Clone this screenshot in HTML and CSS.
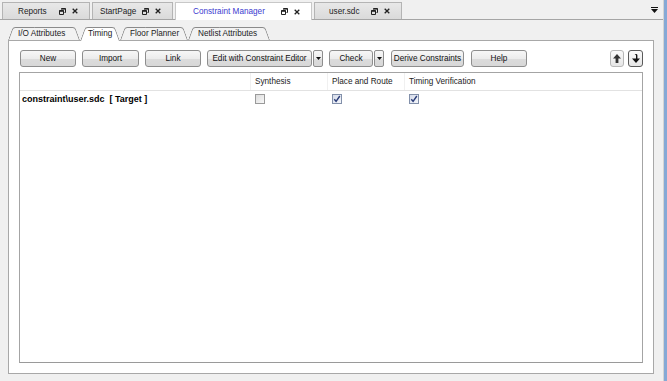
FILE: index.html
```html
<!DOCTYPE html>
<html lang="en">
<head>
    <meta charset="UTF-8">
    <meta name="viewport" content="width=device-width, initial-scale=1.0">
    <title>Constraint Manager</title>
    <link rel="stylesheet" href="styles.css">
</head>
<body>
    <div class="app">
        <div class="main">
            <div class="doc-tabs">
                <div class="doc-tab tab-reports">
                    <span class="tab-label">Reports</span>
                    <span class="tab-icons">
                        <svg width="7" height="7" viewBox="0 0 7 7"><path d="M2.5 1.5V.5h4v4H5.5" fill="none" stroke="#222"/><path d="M.5 2.5h4v4h-4z" fill="none" stroke="#222"/><path d="M.5 3h4" stroke="#222" stroke-width="1.6"/><path d="M2.5 1h4" stroke="#222" stroke-width="1.2"/></svg>
                        <svg width="6" height="6" viewBox="0 0 6 6"><path d="M.7.7l4.6 4.6M5.3.7L.7 5.3" stroke="#222" stroke-width="1.3"/></svg>
                    </span>
                </div>
                <div class="doc-tab tab-start">
                    <span class="tab-label">StartPage</span>
                    <span class="tab-icons">
                        <svg width="7" height="7" viewBox="0 0 7 7"><path d="M2.5 1.5V.5h4v4H5.5" fill="none" stroke="#222"/><path d="M.5 2.5h4v4h-4z" fill="none" stroke="#222"/><path d="M.5 3h4" stroke="#222" stroke-width="1.6"/><path d="M2.5 1h4" stroke="#222" stroke-width="1.2"/></svg>
                        <svg width="6" height="6" viewBox="0 0 6 6"><path d="M.7.7l4.6 4.6M5.3.7L.7 5.3" stroke="#222" stroke-width="1.3"/></svg>
                    </span>
                </div>
                <div class="doc-tab tab-cm active">
                    <span class="tab-label">Constraint Manager</span>
                    <span class="tab-icons">
                        <svg width="7" height="7" viewBox="0 0 7 7"><path d="M2.5 1.5V.5h4v4H5.5" fill="none" stroke="#222"/><path d="M.5 2.5h4v4h-4z" fill="none" stroke="#222"/><path d="M.5 3h4" stroke="#222" stroke-width="1.6"/><path d="M2.5 1h4" stroke="#222" stroke-width="1.2"/></svg>
                        <svg width="6" height="6" viewBox="0 0 6 6"><path d="M.7.7l4.6 4.6M5.3.7L.7 5.3" stroke="#222" stroke-width="1.3"/></svg>
                    </span>
                </div>
                <div class="doc-tab tab-user">
                    <span class="tab-label">user.sdc</span>
                    <span class="tab-icons">
                        <svg width="7" height="7" viewBox="0 0 7 7"><path d="M2.5 1.5V.5h4v4H5.5" fill="none" stroke="#222"/><path d="M.5 2.5h4v4h-4z" fill="none" stroke="#222"/><path d="M.5 3h4" stroke="#222" stroke-width="1.6"/><path d="M2.5 1h4" stroke="#222" stroke-width="1.2"/></svg>
                        <svg width="6" height="6" viewBox="0 0 6 6"><path d="M.7.7l4.6 4.6M5.3.7L.7 5.3" stroke="#222" stroke-width="1.3"/></svg>
                    </span>
                </div>
                <div class="tab-overflow">
                    <svg width="7" height="6" viewBox="0 0 7 6"><path d="M0 .5h7" stroke="#111"/><path d="M0 2h7L3.5 6z" fill="#111"/></svg>
                </div>
            </div>

            <div class="view">
                <div class="sub-tabs">
                    <div class="sub-tab tab-io">I/O Attributes</div>
                    <div class="sub-tab tab-timing active">Timing</div>
                    <div class="sub-tab tab-floor">Floor Planner</div>
                    <div class="sub-tab tab-netlist">Netlist Attributes</div>
                </div>

                <div class="panel">
                    <div class="toolbar">
                        <button class="btn btn-new">New</button>
                        <button class="btn btn-import">Import</button>
                        <button class="btn btn-link">Link</button>
                        <div class="split">
                            <button class="btn btn-edit">Edit with Constraint Editor</button>
                            <button class="btn btn-drop"><svg width="5" height="3" viewBox="0 0 5 3"><path d="M0 0h5L2.5 3z" fill="#111"/></svg></button>
                        </div>
                        <div class="split">
                            <button class="btn btn-check">Check</button>
                            <button class="btn btn-drop"><svg width="5" height="3" viewBox="0 0 5 3"><path d="M0 0h5L2.5 3z" fill="#111"/></svg></button>
                        </div>
                        <button class="btn btn-derive">Derive Constraints</button>
                        <button class="btn btn-help">Help</button>

                        <div class="move-btns">
                            <button class="btn btn-arrow">
                                <svg width="8" height="9" viewBox="0 0 8 9"><path d="M4 0L8 4.5H5.4V9H2.6V4.5H0z" fill="#333"/></svg>
                            </button>
                            <button class="btn btn-arrow focused">
                                <svg width="8" height="9" viewBox="0 0 8 9"><path d="M4 9L8 4.5H5.4V1.2Q5.4 0 4 0H2.6Q4 .6 4 1.6V4.5H0z" fill="#111"/></svg>
                            </button>
                        </div>
                    </div>

                    <div class="grid">
                        <div class="grid-head">
                            <div class="cell col-name"></div>
                            <div class="cell col-flag">Synthesis</div>
                            <div class="cell col-flag">Place and Route</div>
                            <div class="cell col-last">Timing Verification</div>
                        </div>
                        <div class="grid-row">
                            <div class="cell col-name name">constraint\user.sdc&nbsp; [ Target ]</div>
                            <div class="cell col-flag"><span class="check"></span></div>
                            <div class="cell col-flag"><span class="check on"><svg width="8" height="8" viewBox="0 0 8 8"><path d="M1.3 4.2l1.8 2.2L6.8 1" fill="none" stroke="#2a3c78" stroke-width="1.4"/></svg></span></div>
                            <div class="cell col-last"><span class="check on"><svg width="8" height="8" viewBox="0 0 8 8"><path d="M1.3 4.2l1.8 2.2L6.8 1" fill="none" stroke="#2a3c78" stroke-width="1.4"/></svg></span></div>
                        </div>
                    </div>
                </div>
            </div>
        </div>
        <div class="edge"></div>
    </div>
</body>
</html>
```

FILE: styles.css
```css
* {
    margin: 0;
    padding: 0;
    box-sizing: border-box;
}

body {
    font-family: 'Liberation Sans', Arial, sans-serif;
    font-size: 8.2px;
    color: #111;
    background: #f0f0f0;
    width: 667px;
    height: 381px;
    overflow: hidden;
}

.app {
    display: flex;
    height: 381px;
}

.main {
    flex: 1;
    display: flex;
    flex-direction: column;
}

.edge {
    width: 4px;
    border-left: 1px solid #d4d4d4;
    background: #86a9d6;
}

/* document tabs */

.doc-tabs {
    height: 20px;
    display: flex;
    align-items: flex-end;
    gap: 2px;
    padding-left: 2px;
    border-bottom: 1px solid #a5a5a5;
    background: #f0f0f0;
}

.doc-tab {
    height: 17px;
    display: flex;
    align-items: center;
    padding: 0 11px 0 15px;
    border: 1px solid #b4b4b4;
    border-bottom: none;
    background: linear-gradient(#e8e8e8, #dadada);
    color: #222;
}

.tab-label {
    flex: 1;
}

.doc-tab.active {
    height: 18px;
    margin-bottom: -1px;
    background: #fff;
    color: #3b3bcf;
    border-color: #c8c8c8;
}

.tab-reports { width: 88px; }
.tab-start { width: 81px; padding-left: 7px; }
.tab-cm { width: 137px; padding-left: 17px; }
.tab-user { width: 88px; padding-left: 14px; }

.tab-icons {
    display: flex;
    align-items: center;
    gap: 6px;
}

.tab-icons svg {
    display: block;
}

.tab-overflow {
    margin-left: auto;
    align-self: center;
    padding-right: 5px;
    padding-top: 1px;
}

.tab-overflow svg {
    display: block;
}

/* view */

.view {
    flex: 1;
    display: flex;
    flex-direction: column;
    padding: 0 9px 7px 8px;
}

.sub-tabs {
    position: relative;
    z-index: 1;
    display: flex;
    height: 13px;
    margin-top: 7px;
}

.sub-tab {
    position: relative;
    isolation: isolate;
    height: 13px;
    line-height: 13px;
    padding-left: 10px;
    font-size: 8.2px;
    color: #222;
    white-space: nowrap;
}

.tab-io { width: 72px; }
.tab-timing { width: 40px; padding-left: 8px; }
.tab-floor { width: 68px; }
.tab-netlist { width: 82px; }

.sub-tab::before,
.sub-tab::after {
    content: '';
    position: absolute;
    top: 0;
    bottom: 0;
    width: 55%;
    border-top: 1px solid #8a8a8a;
    background: #f2f2f2;
    z-index: -1;
}

.sub-tab::before {
    left: 0;
    border-left: 1px solid #8a8a8a;
    border-top-left-radius: 3px;
    transform-origin: bottom left;
    transform: skewX(-20deg);
}

.sub-tab::after {
    right: 0;
    border-right: 1px solid #8a8a8a;
    border-top-right-radius: 3px;
    transform-origin: bottom right;
    transform: skewX(20deg);
}

.sub-tab.active {
    height: 14px;
}

.sub-tab.active::before,
.sub-tab.active::after {
    background: #fff;
}

.panel {
    flex: 1;
    display: flex;
    flex-direction: column;
    background: #fff;
    border: 1px solid #a8a8a8;
    padding: 9px 10px 10px 10px;
}

/* toolbar */

.toolbar {
    display: flex;
    height: 17px;
    gap: 6px;
    padding-left: 1px;
}

.btn {
    height: 17px;
    font-family: inherit;
    font-size: 8.2px;
    color: #111;
    border: 1px solid #8e8e8e;
    border-radius: 3px;
    background: linear-gradient(#f7f7f7 0%, #ececec 50%, #dcdcdc 51%, #d8d8d8 100%);
    display: flex;
    align-items: center;
    justify-content: center;
}

.btn-new { width: 56px; }
.btn-import { width: 57px; }
.btn-link { width: 56px; }
.btn-edit { width: 105px; }
.btn-check { width: 44px; }
.btn-derive { width: 73px; margin-left: 1px; }
.btn-help { width: 56px; margin-left: 1px; }

.split {
    display: flex;
    gap: 1px;
}

.btn-drop {
    width: 10px;
    border-radius: 2px;
}

.btn-drop svg {
    display: block;
}

.move-btns {
    margin-left: auto;
    display: flex;
    gap: 4px;
}

.btn-arrow {
    width: 14px;
    border-color: #b8b8b8;
    background: linear-gradient(#fafafa, #e6e6e6);
}

.btn-arrow.focused {
    width: 15px;
    border-color: #5a5a5a;
}

.btn-arrow svg {
    display: block;
}

/* grid */

.grid {
    flex: 1;
    margin-top: 5px;
    border: 1px solid #a4a4a4;
    border-bottom-color: #9a9a9a;
}

.grid-head,
.grid-row {
    display: flex;
}

.grid-head {
    height: 18px;
    border-bottom: 1px solid #e2e2e2;
    color: #222;
}

.grid-row {
    height: 16px;
}

.cell {
    display: flex;
    align-items: center;
    padding-left: 5px;
}

.col-name {
    width: 230px;
    padding-left: 2px;
}

.col-flag {
    width: 77px;
}

.grid-head .col-flag,
.grid-head .col-last {
    border-left: 1px solid #f0f0f0;
    padding-left: 4px;
}

.col-last {
    flex: 1;
}

.name {
    font-weight: bold;
    font-size: 9px;
    color: #000;
}

.check {
    width: 10px;
    height: 10px;
    border: 1px solid #9a9a9a;
    background: linear-gradient(135deg, #dcdcdc, #f8f8f8);
    display: flex;
    align-items: center;
    justify-content: center;
}

.check.on {
    border-color: #8290aa;
    background: linear-gradient(135deg, #d6dcea, #f4f6fa);
}

.check svg {
    display: block;
}
```
